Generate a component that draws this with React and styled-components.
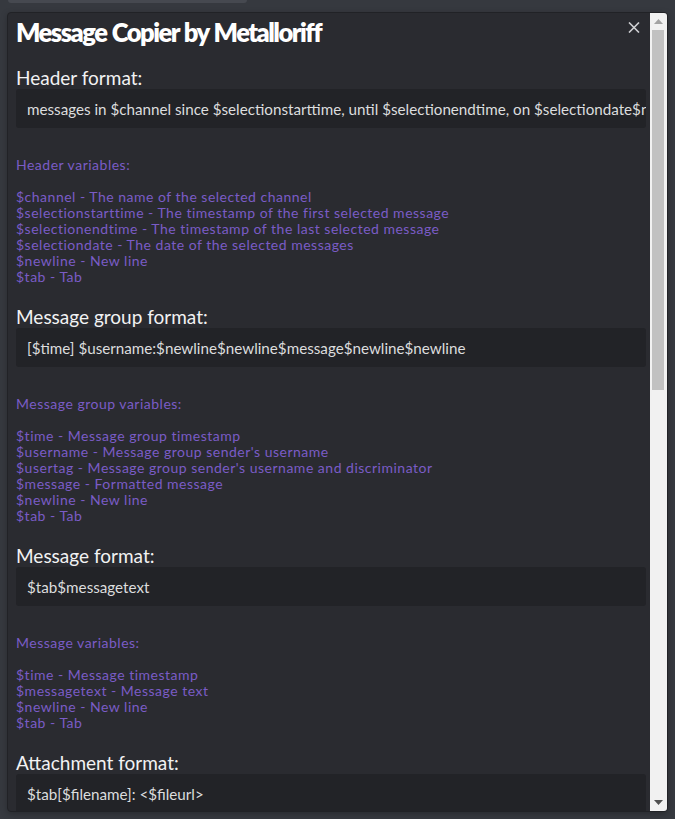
import React from 'react'
import styled, { createGlobalStyle } from 'styled-components'

const GlobalStyle = createGlobalStyle`
  html, body {
    margin: 0;
    padding: 0;
    background-color: #36393f;
    height: 819px;
    overflow: hidden;
  }
  * {
    box-sizing: border-box;
  }
`

const Page = styled.div`
  padding: 0 7px;
  font-family: Lato, 'Noto Sans', sans-serif;
`

const TopTab = styled.div`
  width: 239px;
  height: 3px;
  margin-left: 1px;
  background-color: #464950;
  border-radius: 0 0 3px 3px;
`

const Modal = styled.div`
  position: relative;
  display: flex;
  margin-top: 9px;
  width: 661px;
  height: 800px;
  background-color: #2a2b30;
  border: 1px solid #212226;
  border-radius: 4px;
  overflow: hidden;
  box-shadow: 0 2px 6px rgba(0, 0, 0, 0.25);
`

const Content = styled.div`
  flex: 1;
  min-width: 0;
  padding: 2px 4px 0 8px;
  overflow: hidden;
`

const Title = styled.h1`
  margin: 0 0 18px;
  font-size: 25.5px;
  font-weight: 800;
  line-height: 34px;
  color: #ffffff;
  letter-spacing: -1.5px;
  word-spacing: 1px;
`

const Close = styled.button`
  position: absolute;
  top: 9px;
  right: 27px;
  width: 12px;
  height: 11px;
  padding: 0;
  border: none;
  background: none;
  display: flex;
  cursor: pointer;
`

const Section = styled.div`
  margin-bottom: 21px;
`

const Label = styled.div`
  font-size: 19px;
  line-height: 22px;
  color: #f2f2f3;
`

const Input = styled.div`
  height: 39px;
  padding: 0 0 0 11px;
  display: flex;
  align-items: center;
  background-color: #222327;
  border-radius: 3px;
  color: #dcddde;
  font-size: 15.2px;
  white-space: nowrap;
  overflow: hidden;
`

const Variables = styled.div`
  margin-top: 13px;
  padding-top: 16px;
  font-size: 14px;
  letter-spacing: 0.5px;
  line-height: 16px;
  color: #7a5cc6;
`

const VarTitle = styled.div`
  margin-bottom: 16px;
`

const Scrollbar = styled.div`
  width: 17px;
  display: flex;
  flex-direction: column;
  background-color: #f1f1f1;
`

const Arrow = styled.div`
  height: 17px;
  display: flex;
  align-items: center;
  justify-content: center;
  flex-shrink: 0;
`

const Track = styled.div`
  flex: 1;
  padding: 0 3px 0 2px;
`

const Thumb = styled.div`
  height: 360px;
  background-color: #c1c1c1;
`

const Triangle = ({ up }) => (
  <svg width="9" height="5" viewBox="0 0 9 5">
    <path
      d={up ? 'M0 5 L4.5 0 L9 5 Z' : 'M0 0 L4.5 5 L9 0 Z'}
      fill={up ? '#a3a3a3' : '#505050'}
    />
  </svg>
)

const CloseIcon = () => (
  <svg width="12" height="11" viewBox="0 0 12 11">
    <path
      d="M1 0.5 L11 10.5 M11 0.5 L1 10.5"
      stroke="#cfd0d3"
      strokeWidth="1.6"
      fill="none"
    />
  </svg>
)

const sections = [
  {
    label: 'Header format:',
    value:
      'messages in $channel since $selectionstarttime, until $selectionendtime, on $selectiondate$newline$newline',
    title: 'Header variables:',
    vars: [
      '$channel - The name of the selected channel',
      '$selectionstarttime - The timestamp of the first selected message',
      '$selectionendtime - The timestamp of the last selected message',
      '$selectiondate - The date of the selected messages',
      '$newline - New line',
      '$tab - Tab',
    ],
  },
  {
    label: 'Message group format:',
    value: '[$time] $username:$newline$newline$message$newline$newline',
    title: 'Message group variables:',
    vars: [
      '$time - Message group timestamp',
      "$username - Message group sender's username",
      "$usertag - Message group sender's username and discriminator",
      '$message - Formatted message',
      '$newline - New line',
      '$tab - Tab',
    ],
  },
  {
    label: 'Message format:',
    value: '$tab$messagetext',
    title: 'Message variables:',
    vars: [
      '$time - Message timestamp',
      '$messagetext - Message text',
      '$newline - New line',
      '$tab - Tab',
    ],
  },
  {
    label: 'Attachment format:',
    value: '$tab[$filename]: <$fileurl>',
  },
]

const App = () => {
  return (
    <Page>
      <GlobalStyle />
      <TopTab />
      <Modal>
        <Content>
          <Title>Message Copier by Metalloriff</Title>
          {sections.map((s) => (
            <Section key={s.label}>
              <Label>{s.label}</Label>
              <Input>{s.value}</Input>
              {s.vars && (
                <Variables>
                  <VarTitle>{s.title}</VarTitle>
                  {s.vars.map((v) => (
                    <div key={v}>{v}</div>
                  ))}
                </Variables>
              )}
            </Section>
          ))}
        </Content>
        <Close>
          <CloseIcon />
        </Close>
        <Scrollbar>
          <Arrow>
            <Triangle up />
          </Arrow>
          <Track>
            <Thumb />
          </Track>
          <Arrow>
            <Triangle />
          </Arrow>
        </Scrollbar>
      </Modal>
    </Page>
  )
}

export default App
